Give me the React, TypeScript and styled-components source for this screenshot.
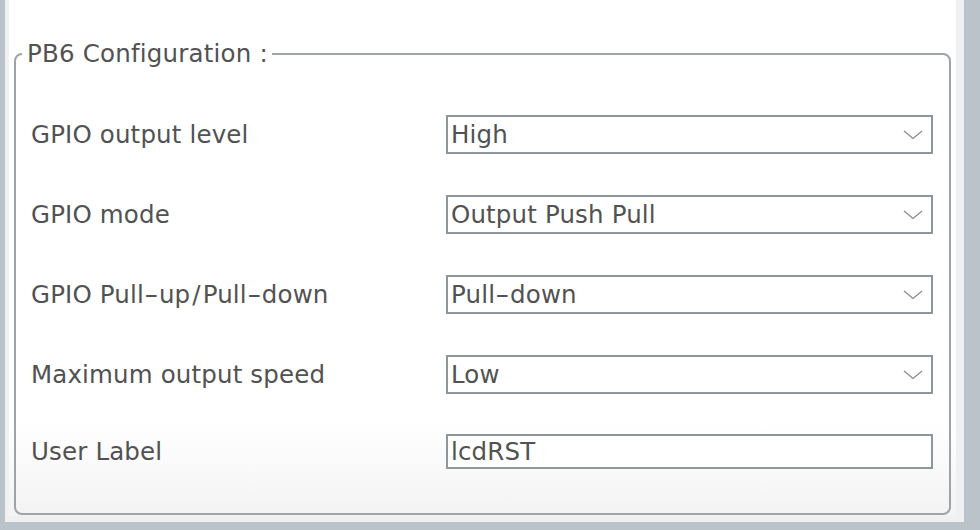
import React from "react";
import styled, { createGlobalStyle } from "styled-components";

const Global = createGlobalStyle`
  html, body { margin: 0; padding: 0; background: #b9c3c9; }
  body { width: 980px; height: 530px; overflow: hidden; }
`;

const Frame = styled.div`
  width: 980px;
  height: 530px;
  box-sizing: border-box;
  background: #b9c3c9;
  padding: 0 16px 8px 5px;
  display: flex;
`;

const Inset = styled.div`
  flex: 1;
  display: flex;
  background: #eef0f2;
  padding: 0 8px 6px 4px;
`;

const Panel = styled.div`
  flex: 1;
  display: flex;
  flex-direction: column;
  background: linear-gradient(to bottom, #ffffff 82%, #f3f3f3 100%);
  padding: 40px 5px 1px 5px;
  font-family: "DejaVu Sans", "Liberation Sans", sans-serif;
  color: #525252;
`;

const Group = styled.fieldset`
  margin: 0;
  padding: 0 16px 24px 15px;
  border: 2px solid #9ea3a7;
  border-radius: 8px;
  min-width: 0;
`;

const Legend = styled.legend`
  margin-left: -9px;
  padding: 0 4px 0 5px;
  font-size: 24.5px;
  line-height: 28px;
  letter-spacing: 0.2px;
  color: #525252;
`;

const Rows = styled.div`
  display: flex;
  flex-direction: column;
  padding-top: 26px;
`;

const Row = styled.div<{ $h: number }>`
  display: grid;
  grid-template-columns: 415px 1fr;
  align-items: center;
  height: ${(p) => p.$h}px;
`;

const Label = styled.div`
  font-size: 24.5px;
  letter-spacing: 0.15px;
  color: #525252;
  white-space: nowrap;
`;

const Box = styled.div<{ $h: number }>`
  height: ${(p) => p.$h}px;
  box-sizing: border-box;
  border: 2px solid #8f969b;
  background: #fff;
  display: flex;
  align-items: center;
  padding: 0 8px 0 3px;
  font-size: 24.5px;
  letter-spacing: 0.15px;
  color: #525252;
`;

const Value = styled.span`
  flex: 1;
  white-space: nowrap;
`;

const Hyphen = styled.span`
  display: inline-block;
  width: 15px;
  text-align: center;
  transform: scaleX(1.6);
`;

const Slash = styled.span`
  margin: 0 2px;
`;

const Spaced = ({ text }: { text: string }) => (
  <>
    {text.split(/([-/])/).map((part, i) =>
      part === "-" ? (
        <Hyphen key={i}>-</Hyphen>
      ) : part === "/" ? (
        <Slash key={i}>/</Slash>
      ) : (
        <React.Fragment key={i}>{part}</React.Fragment>
      )
    )}
  </>
);

const Chevron = () => (
  <svg width="20" height="11" viewBox="0 0 20 11" style={{ display: "block" }}>
    <path d="M1 2 L10 9.5 L19 2" fill="none" stroke="#8c8c8c" strokeWidth="1.3" />
  </svg>
);

const rows = [
  { label: "GPIO output level", value: "High", select: true },
  { label: "GPIO mode", value: "Output Push Pull", select: true },
  { label: "GPIO Pull-up/Pull-down", value: "Pull-down", select: true },
  { label: "Maximum output speed", value: "Low", select: true },
  { label: "User Label", value: "lcdRST", select: false },
];

export default function App() {
  return (
    <>
      <Global />
      <Frame>
        <Inset>
          <Panel>
            <Group>
              <Legend>PB6 Configuration :</Legend>
              <Rows>
                {rows.map((r) => (
                  <Row key={r.label} $h={r.select ? 80 : 75}>
                    <Label>
                      <Spaced text={r.label} />
                    </Label>
                    <Box $h={r.select ? 39 : 35}>
                      <Value>
                        <Spaced text={r.value} />
                      </Value>
                      {r.select && <Chevron />}
                    </Box>
                  </Row>
                ))}
              </Rows>
            </Group>
          </Panel>
        </Inset>
      </Frame>
    </>
  );
}
